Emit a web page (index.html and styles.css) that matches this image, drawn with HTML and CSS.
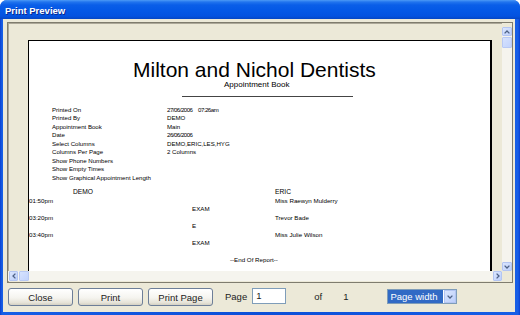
FILE: index.html
```html
<!DOCTYPE html>
<html lang="en">

<head>
    <meta charset="UTF-8">
    <title>Print Preview</title>
    <link rel="stylesheet" href="styles.css">
</head>

<body>
    <div class="window">
        <div class="titlebar">Print Preview</div>

        <div class="client">
            <div class="frame">
                <div class="viewport">
                    <div class="page">
                        <h1 class="title">Milton and Nichol Dentists</h1>
                        <div class="subtitle">Appointment Book</div>
                        <hr class="rule">

                        <div class="info">
                            <span>Printed On</span><span><span class="date">27/06/2006</span><span class="clock">07:26am</span></span>
                            <span>Printed By</span><span>DEMO</span>
                            <span>Appointment Book</span><span>Main</span>
                            <span>Date</span><span class="clock">26/06/2006</span>
                            <span>Select Columns</span><span>DEMO,ERIC,LES,HYG</span>
                            <span>Columns Per Page</span><span>2 Columns</span>
                            <span>Show Phone Numbers</span><span></span>
                            <span>Show Empty Times</span><span></span>
                            <span>Show Graphical Appointment Length</span><span></span>
                        </div>

                        <div class="schedule">
                            <span class="col-head demo">DEMO</span><span></span><span class="col-head">ERIC</span>
                            <span>01:50pm</span><span></span><span>Miss Raewyn Mulderry</span>
                            <span></span><span>EXAM</span><span></span>
                            <span>03:20pm</span><span></span><span>Trevor Bade</span>
                            <span></span><span>E</span><span></span>
                            <span>03:40pm</span><span></span><span>Miss Julie Wilson</span>
                            <span></span><span>EXAM</span><span></span>
                        </div>

                        <div class="end">--End Of Report--</div>
                    </div>
                </div>

                <div class="vscroll">
                    <div class="sb-btn">
                        <svg viewBox="0 0 6 4"><path d="M0.6 3.4 L3 1 L5.4 3.4" /></svg>
                    </div>
                    <div class="sb-thumb"></div>
                    <div class="sb-track"></div>
                    <div class="sb-btn">
                        <svg viewBox="0 0 6 4"><path d="M0.6 0.6 L3 3 L5.4 0.6" /></svg>
                    </div>
                </div>

                <div class="hscroll">
                    <div class="sb-btn">
                        <svg viewBox="0 0 4 6"><path d="M3.4 0.6 L1 3 L3.4 5.4" /></svg>
                    </div>
                    <div class="sb-thumb"></div>
                    <div class="sb-track"></div>
                    <div class="sb-btn">
                        <svg viewBox="0 0 4 6"><path d="M0.6 0.6 L3 3 L0.6 5.4" /></svg>
                    </div>
                </div>

                <div class="corner"></div>
            </div>

            <div class="toolbar">
                <button class="btn">Close</button>
                <button class="btn">Print</button>
                <button class="btn">Print Page</button>
                <span class="label page-label">Page</span>
                <div class="page-input">1</div>
                <span class="label of-label">of</span>
                <span class="label count-label">1</span>
                <div class="zoom-select">
                    <span class="zoom-value">Page width</span>
                    <span class="zoom-drop">
                        <svg viewBox="0 0 6 4"><path d="M0.6 0.6 L3 3 L5.4 0.6" /></svg>
                    </span>
                </div>
            </div>
        </div>
    </div>
</body>

</html>
```

FILE: styles.css
```css
/* Reset */
* {
    margin: 0;
    padding: 0;
    box-sizing: border-box;
}

body {
    background: #fff;
    font-family: "Liberation Sans", Arial, sans-serif;
}

/* Window chrome */
.window {
    width: 520px;
    height: 315px;
    display: flex;
    flex-direction: column;
    background: linear-gradient(90deg, #0a3fd0, #165ee6 2px, #0b4fd8 50%, #165ee6 calc(100% - 2px), #0a3fd0);
    border-radius: 7px 7px 0 0;
    overflow: hidden;
}

.titlebar {
    flex: none;
    height: 19px;
    padding: 1px 0 0 5px;
    line-height: 20px;
    font-size: 9.5px;
    font-weight: bold;
    color: #fff;
    text-shadow: 1px 1px #0c2a8c;
    background: linear-gradient(#4c9af6 0, #2174ee 2px, #0a5ee8 5px, #0458e6 55%, #0352e0 85%, #0546c4 100%);
}

.client {
    flex: 1;
    margin: 0 5px 3px 3px;
    padding: 3px 2px 0 4px;
    background: #ece9d8;
    display: flex;
    flex-direction: column;
}

/* Preview frame */
.frame {
    flex: none;
    height: 261px;
    border: 1px solid #7f7c6e;
    box-shadow: inset 1px 1px #aca899;
    padding-bottom: 1px;
    display: grid;
    grid-template-columns: 1fr 10px;
    grid-template-rows: 1fr 10px;
}

.viewport {
    overflow: hidden;
}

.page {
    height: 400px;
    margin: 17px 10px 0 20px;
    padding-top: 18px;
    background: #fff;
    border: solid #000;
    border-width: 1px 2px 0 1px;
    color: #000;
}

.title {
    padding-left: 104px;
    font-size: 21px;
    line-height: 21px;
    font-weight: normal;
    white-space: nowrap;
}

.subtitle {
    padding-left: 195px;
    font-size: 8px;
    line-height: 9px;
}

.rule {
    width: 171px;
    height: 1px;
    margin: 7px 0 0 153px;
    border: 0;
    background: #444;
}

.info {
    margin-top: 8.75px;
    padding-left: 23px;
    display: grid;
    grid-template-columns: 115px auto;
    font-size: 6.1px;
    line-height: 8.5px;
    white-space: nowrap;
}

.info .date {
    display: inline-block;
    width: 31px;
}

.info .date,
.info .clock {
    letter-spacing: -0.5px;
}

.schedule {
    margin-top: 5.75px;
    display: grid;
    grid-template-columns: 163px 83px 1fr;
    grid-auto-rows: 8.5px;
    font-size: 6.2px;
    line-height: 8.5px;
    white-space: nowrap;
}

.col-head {
    font-size: 6.7px;
}

.col-head.demo {
    padding-left: 44px;
}

.end {
    margin-top: 8.25px;
    padding-left: 201px;
    font-size: 6.2px;
    line-height: 8.5px;
}

/* Scrollbars */
.vscroll {
    display: flex;
    flex-direction: column;
    border-top: 4px solid #ece9d8;
    background: #f5f4ee;
}

.hscroll {
    display: flex;
    padding-left: 1px;
    background: #f5f4ee;
}

.corner {
    background: #ece9d8;
}

.sb-btn {
    flex: none;
    width: 10px;
    height: 9px;
    display: flex;
    align-items: center;
    justify-content: center;
    background: linear-gradient(135deg, #dbe6fe, #bccffb);
    border: 1px solid #b3c5f2;
    border-radius: 1px;
}

.hscroll .sb-btn {
    width: 9px;
    height: 10px;
}

.sb-btn svg {
    width: 6px;
    height: 4px;
}

.hscroll .sb-btn svg {
    width: 4px;
    height: 6px;
}

.sb-btn path,
.zoom-drop path {
    fill: none;
    stroke: #4d6185;
    stroke-width: 1.3;
}

.sb-thumb {
    flex: none;
    background: linear-gradient(135deg, #d6e2fe, #c2d3fc);
    border: 1px solid #b8c9f4;
    border-radius: 1px;
}

.vscroll .sb-thumb {
    height: 11px;
    margin-top: 1px;
}

.hscroll .sb-thumb {
    width: 10px;
    margin-left: 1px;
}

.sb-track {
    flex: 1;
}

/* Bottom toolbar */
.toolbar {
    display: flex;
    align-items: flex-start;
    padding: 5px 0 0 1px;
    font-size: 9.5px;
    color: #222;
}

.btn {
    width: 65px;
    height: 18px;
    margin-right: 5px;
    border: 1px solid #6d7e98;
    border-radius: 3px;
    background: linear-gradient(#fff, #f5f4ef 55%, #e6e3d8 85%, #d4d0c3);
    font-family: "Liberation Sans", Arial, sans-serif;
    font-size: 9.5px;
    color: #222;
}

.label {
    line-height: 18px;
}

.page-label {
    margin-left: 7px;
}

.page-input {
    width: 34px;
    height: 16px;
    margin-left: 5px;
    padding-left: 3px;
    border: 1px solid #7f9db9;
    background: #fff;
    line-height: 14px;
}

.of-label {
    margin-left: 28px;
}

.count-label {
    margin-left: 21px;
}

.zoom-select {
    width: 70px;
    height: 15px;
    margin: 1px 0 0 39px;
    display: flex;
    border: 1px solid #7f9db9;
    background: #fff;
}

.zoom-value {
    flex: 1;
    padding-left: 2px;
    background: #316ac5;
    color: #fff;
    line-height: 13px;
}

.zoom-drop {
    width: 12px;
    margin-left: 1px;
    display: flex;
    align-items: center;
    justify-content: center;
    background: linear-gradient(135deg, #dbe6fe, #bccffb);
    border: 1px solid #b3c5f2;
}

.zoom-drop svg {
    width: 6px;
    height: 4px;
}
```
